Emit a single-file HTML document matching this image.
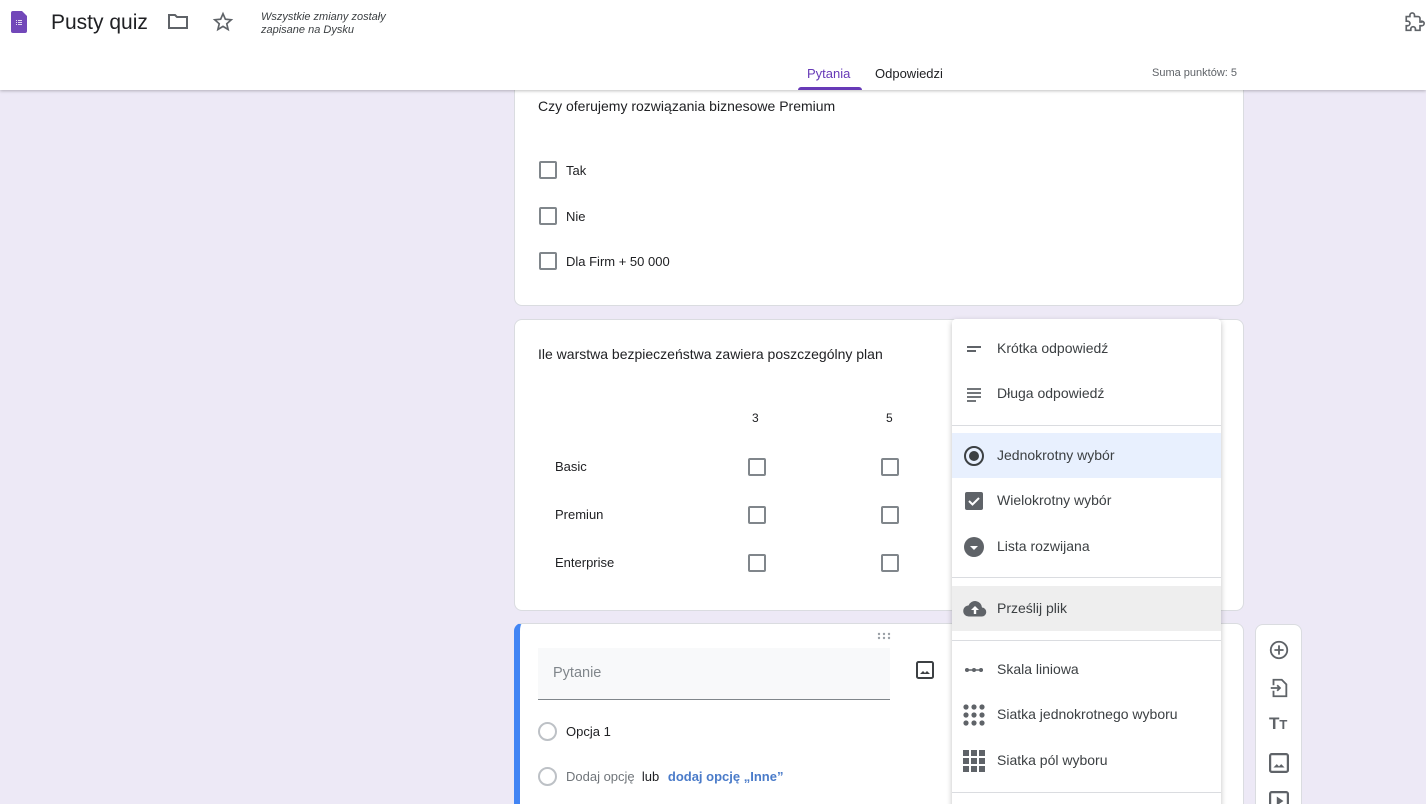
<!DOCTYPE html>
<html><head><meta charset="utf-8"><style>
*{box-sizing:border-box;margin:0;padding:0}
html,body{width:1426px;height:804px;overflow:hidden}
body{background:#ede9f6;font-family:"Liberation Sans",Arial,sans-serif;color:#202124;position:relative}
.hdr{position:absolute;left:0;top:0;width:1426px;height:90px;background:#fff;box-shadow:0 1px 3px rgba(0,0,0,.25);z-index:5}
.abs{position:absolute}
.card{position:absolute;background:#fff;border-radius:8px;border:1px solid #dadce0}
.cb{position:absolute;width:18px;height:18px;border:2px solid #80868b;border-radius:2px}
.t14{font-size:14px;color:#202124}
.menu{position:absolute;left:952px;top:319px;width:269px;height:500px;background:#fff;box-shadow:0 2px 6px rgba(0,0,0,.25);border-radius:4px;z-index:4}
.mi{position:absolute;left:0;width:269px;height:45px;font-size:14px;color:#3c4043}
.mi span{position:absolute;left:45px;top:14px}
.mi svg{position:absolute;left:10px;top:11px}
.dv{position:absolute;left:0;width:269px;height:1px;background:#dadce0}
</style></head><body>
<div class="hdr">
 <svg class="abs" style="left:11px;top:11px" width="16" height="22" viewBox="0 0 16 22"><path d="M2 0h9l5 5v15a2 2 0 0 1-2 2H2a2 2 0 0 1-2-2V2a2 2 0 0 1 2-2z" fill="#7248b9"/><path d="M5 9h1v1H5zM7 9h4v1H7zM5 11h1v1H5zM7 11h4v1H7zM5 13h1v1H5zM7 13h4v1H7z" fill="#fff" opacity=".8"/></svg>
 <div class="abs" style="left:51px;top:11px;font-size:21px;color:#202124">Pusty quiz</div>
 <svg class="abs" style="left:167px;top:12px" width="22" height="20" viewBox="0 0 22 20"><path d="M2 3h6l2 2h10v11H2z" fill="none" stroke="#5f6368" stroke-width="2"/></svg>
 <svg class="abs" style="left:212px;top:11px" width="22" height="22" viewBox="0 0 24 24"><path d="M12 3l2.6 6 6.4.6-4.9 4.3 1.5 6.3L12 16.8 6.4 20.2l1.5-6.3L3 9.6l6.4-.6z" fill="none" stroke="#5f6368" stroke-width="1.8"/></svg>
 <div class="abs" style="left:261px;top:11px;font-size:11px;font-style:italic;color:#3c4043;line-height:13px">Wszystkie zmiany zostały<br>zapisane na Dysku</div>
 <svg class="abs" style="left:1403px;top:12px" width="23" height="22" viewBox="0 0 24 24"><path d="M20 11h-2V7a2 2 0 0 0-2-2h-4V3.5a2.5 2.5 0 0 0-5 0V5H3v5h1.5a2.5 2.5 0 0 1 0 5H3v5h5v-1.5a2.5 2.5 0 0 1 5 0V20h5v-5h2a2.5 2.5 0 0 0 0-5z" fill="none" stroke="#5f6368" stroke-width="1.8"/></svg>
 <div class="abs" style="left:807px;top:66px;font-size:13px;color:#673ab7">Pytania</div>
 <div class="abs" style="left:798px;top:87px;width:64px;height:3px;background:#673ab7;border-radius:3px 3px 0 0"></div>
 <div class="abs" style="left:875px;top:66px;font-size:13px;color:#202124">Odpowiedzi</div>
 <div class="abs" style="left:1152px;top:67px;font-size:11px;color:#5f6368">Suma punktów: 5</div>
</div>

<div class="card" style="left:514px;top:60px;width:730px;height:246px">
 <div class="abs t14" style="left:23px;top:37px;font-size:14px">Czy oferujemy rozwiązania biznesowe Premium</div>
 <div class="cb" style="left:24px;top:100px"></div><div class="abs t14" style="left:51px;top:102px;font-size:13px">Tak</div>
 <div class="cb" style="left:24px;top:146px"></div><div class="abs t14" style="left:51px;top:148px;font-size:13px">Nie</div>
 <div class="cb" style="left:24px;top:191px"></div><div class="abs t14" style="left:51px;top:193px;font-size:13px">Dla Firm + 50 000</div>
</div>

<div class="card" style="left:514px;top:319px;width:730px;height:292px">
 <div class="abs t14" style="left:23px;top:26px;font-size:14px">Ile warstwa bezpieczeństwa zawiera poszczególny plan</div>
 <div class="abs" style="left:237px;top:91px;font-size:12px">3</div>
 <div class="abs" style="left:371px;top:91px;font-size:12px">5</div>
 <div class="abs" style="left:40px;top:139px;font-size:13px">Basic</div>
 <div class="abs" style="left:40px;top:187px;font-size:13px">Premiun</div>
 <div class="abs" style="left:40px;top:235px;font-size:13px">Enterprise</div>
 <div class="cb" style="left:233px;top:138px"></div><div class="cb" style="left:366px;top:138px"></div>
 <div class="cb" style="left:233px;top:186px"></div><div class="cb" style="left:366px;top:186px"></div>
 <div class="cb" style="left:233px;top:234px"></div><div class="cb" style="left:366px;top:234px"></div>
</div>

<div class="card" style="left:514px;top:623px;width:730px;height:200px;border-left:6px solid #4285f4">
 <svg class="abs" style="left:357px;top:8px" width="16" height="8"><g fill="#9aa0a6"><circle cx="2" cy="2" r="1.2"/><circle cx="7" cy="2" r="1.2"/><circle cx="12" cy="2" r="1.2"/><circle cx="2" cy="6" r="1.2"/><circle cx="7" cy="6" r="1.2"/><circle cx="12" cy="6" r="1.2"/></g></svg>
 <div class="abs" style="left:18px;top:24px;width:352px;height:52px;background:#f8f9fa;border-bottom:1px solid #80868b"></div>
 <div class="abs" style="left:33px;top:41px;font-size:14.5px;color:#80868b">Pytanie</div>
 <svg class="abs" style="left:396px;top:37px" width="18" height="18" viewBox="0 0 18 18"><rect x="1" y="1" width="16" height="16" rx="1.5" fill="none" stroke="#3c4043" stroke-width="2"/><path d="M4 13l3-3 2 2 2-2 3 3z" fill="#3c4043"/></svg>
 <div class="abs" style="left:18px;top:98px;width:19px;height:19px;border:2px solid #bdc1c6;border-radius:50%"></div>
 <div class="abs" style="left:46px;top:100px;font-size:13px">Opcja 1</div>
 <div class="abs" style="left:18px;top:143px;width:19px;height:19px;border:2px solid #bdc1c6;border-radius:50%"></div>
 <div class="abs" style="left:46px;top:145px;font-size:13px;color:#70757a">Dodaj opcję <span style="color:#202124">&nbsp;lub</span> <span style="color:#4a7bc9;font-weight:bold;margin-left:5px">dodaj opcję „Inne”</span></div>
</div>

<div class="menu">
 <div class="mi" style="top:7px"><svg width="24" height="24"><path d="M5 10h14M5 14h9" stroke="#5f6368" stroke-width="2"/></svg><span>Krótka odpowiedź</span></div>
 <div class="mi" style="top:52px"><svg width="24" height="24"><path d="M5 7h14M5 11h14M5 15h14M5 19h9" stroke="#5f6368" stroke-width="1.8"/></svg><span>Długa odpowiedź</span></div>
 <div class="dv" style="top:106px"></div>
 <div class="mi" style="top:114px;background:#e8f0fe"><svg width="24" height="24"><circle cx="12" cy="12" r="9" fill="none" stroke="#3c4043" stroke-width="2"/><circle cx="12" cy="12" r="5" fill="#3c4043"/></svg><span>Jednokrotny wybór</span></div>
 <div class="mi" style="top:159px"><svg width="24" height="24"><rect x="3" y="3" width="18" height="18" rx="2" fill="#5f6368"/><path d="M7 12l3.5 3.5L17 9" fill="none" stroke="#fff" stroke-width="2"/></svg><span>Wielokrotny wybór</span></div>
 <div class="mi" style="top:205px"><svg width="24" height="24"><circle cx="12" cy="12" r="10" fill="#5f6368"/><path d="M8 11h8l-4 4z" fill="#fff"/></svg><span>Lista rozwijana</span></div>
 <div class="dv" style="top:258px"></div>
 <div class="mi" style="top:267px;background:#eeeeee"><svg width="26" height="24"><path d="M20 10.5A7 7 0 0 0 6.5 8.5 5.5 5.5 0 0 0 7 19.5h12.5a4.5 4.5 0 0 0 .5-9z" fill="#5f6368"/><path d="M13 9l-4 4h2.8v4h2.4v-4H17z" fill="#fff"/></svg><span>Prześlij plik</span></div>
 <div class="dv" style="top:321px"></div>
 <div class="mi" style="top:328px"><svg width="24" height="24"><path d="M3 12h18" stroke="#5f6368" stroke-width="1.5"/><circle cx="5" cy="12" r="2" fill="#5f6368"/><circle cx="12" cy="12" r="2" fill="#5f6368"/><circle cx="19" cy="12" r="2" fill="#5f6368"/></svg><span>Skala liniowa</span></div>
 <div class="mi" style="top:373px"><svg width="24" height="24"><g fill="#5f6368"><circle cx="4" cy="4" r="2.6"/><circle cx="12" cy="4" r="2.6"/><circle cx="20" cy="4" r="2.6"/><circle cx="4" cy="12" r="2.6"/><circle cx="12" cy="12" r="2.6"/><circle cx="20" cy="12" r="2.6"/><circle cx="4" cy="20" r="2.6"/><circle cx="12" cy="20" r="2.6"/><circle cx="20" cy="20" r="2.6"/></g></svg><span>Siatka jednokrotnego wyboru</span></div>
 <div class="mi" style="top:419px"><svg width="24" height="24"><g fill="#5f6368"><rect x="1" y="1" width="6" height="6"/><rect x="9" y="1" width="6" height="6"/><rect x="17" y="1" width="6" height="6"/><rect x="1" y="9" width="6" height="6"/><rect x="9" y="9" width="6" height="6"/><rect x="17" y="9" width="6" height="6"/><rect x="1" y="17" width="6" height="6"/><rect x="9" y="17" width="6" height="6"/><rect x="17" y="17" width="6" height="6"/></g></svg><span>Siatka pól wyboru</span></div>
 <div class="dv" style="top:473px"></div>
</div>

<div class="card" style="left:1255px;top:624px;width:47px;height:200px">
 <svg class="abs" style="left:12px;top:14px" width="22" height="22" viewBox="0 0 24 24"><circle cx="12" cy="12" r="9" fill="none" stroke="#5f6368" stroke-width="2"/><path d="M12 7v10M7 12h10" stroke="#5f6368" stroke-width="2"/></svg>
 <svg class="abs" style="left:12px;top:52px" width="22" height="22" viewBox="0 0 24 24"><path d="M6 9V3h9l5 5v13H6v-6" fill="none" stroke="#5f6368" stroke-width="2"/><path d="M3 12h10M10 9l3 3-3 3" fill="none" stroke="#5f6368" stroke-width="2"/></svg>
 <div class="abs" style="left:13px;top:89px;font-weight:bold;color:#5f6368;font-size:17px">T<span style="font-size:13px">T</span></div>
 <svg class="abs" style="left:13px;top:128px" width="20" height="20" viewBox="0 0 18 18"><rect x="1" y="1" width="16" height="16" rx="1.5" fill="none" stroke="#5f6368" stroke-width="2"/><path d="M4 13l3-3 2 2 2-2 3 3z" fill="#5f6368"/></svg>
 <svg class="abs" style="left:13px;top:166px" width="20" height="20" viewBox="0 0 18 18"><rect x="1" y="1" width="16" height="16" rx="1.5" fill="none" stroke="#5f6368" stroke-width="2"/><path d="M7 5v8l6-4z" fill="#5f6368"/></svg>
</div>
</body></html>
